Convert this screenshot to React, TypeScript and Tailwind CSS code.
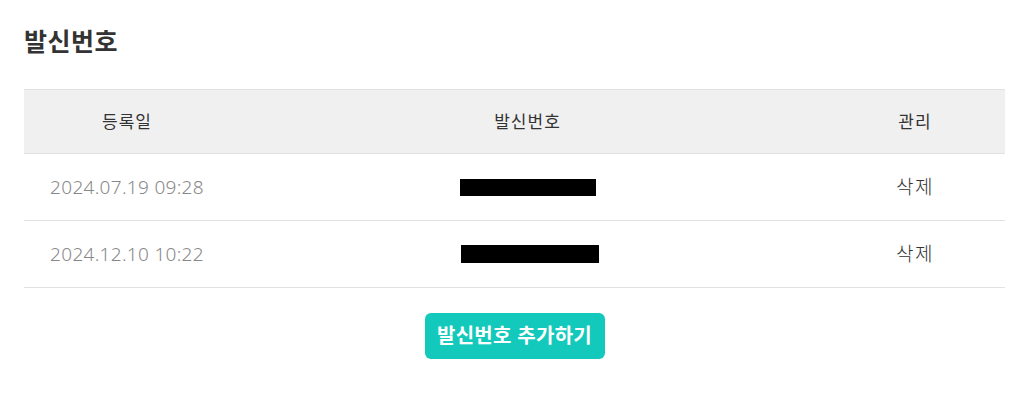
import React from "react";

const rows = [
  { date: "2024.07.19 09:28", bar: "w-[136px] h-[17px]" },
  { date: "2024.12.10 10:22", bar: "w-[138px] h-[18px] translate-x-[2px]" },
];

function App() {
  return (
    <div
      className="min-h-screen bg-white px-6 pt-[25px]"
      style={{ fontFamily: '"Noto Sans", "Noto Sans CJK KR", sans-serif' }}
    >
      <h1 className="text-[25px] font-bold leading-[33px] tracking-[0.5px] text-[#333]">
        발신번호
      </h1>
      <table className="mt-[31px] w-full border-collapse">
        <thead>
          <tr className="h-[64px] border-y border-[#e2e2e2] bg-[#f0f0f0] text-[17px] text-[#333]">
            <th className="w-[206px] font-normal tracking-[1px]">등록일</th>
            <th className="font-normal tracking-[1px]">발신번호</th>
            <th className="w-[180px] font-normal tracking-[1px]">관리</th>
          </tr>
        </thead>
        <tbody>
          {rows.map((row) => (
            <tr key={row.date} className="h-[67px] border-b border-[#e2e2e2]">
              <td className="text-center text-[19px] font-light tracking-[0.3px] text-[#888]">
                {row.date}
              </td>
              <td>
                <div className={`mx-auto bg-black ${row.bar}`} />
              </td>
              <td className="text-center text-[19px] font-light tracking-[1.5px] text-[#333]">
                삭제
              </td>
            </tr>
          ))}
        </tbody>
      </table>
      <div className="mt-[25px] flex justify-center">
        <button className="h-[46px] w-[180px] rounded-md bg-[#13c9bb] text-[20px] font-bold tracking-[0.3px] text-white">
          발신번호 추가하기
        </button>
      </div>
    </div>
  );
}

export default App;
